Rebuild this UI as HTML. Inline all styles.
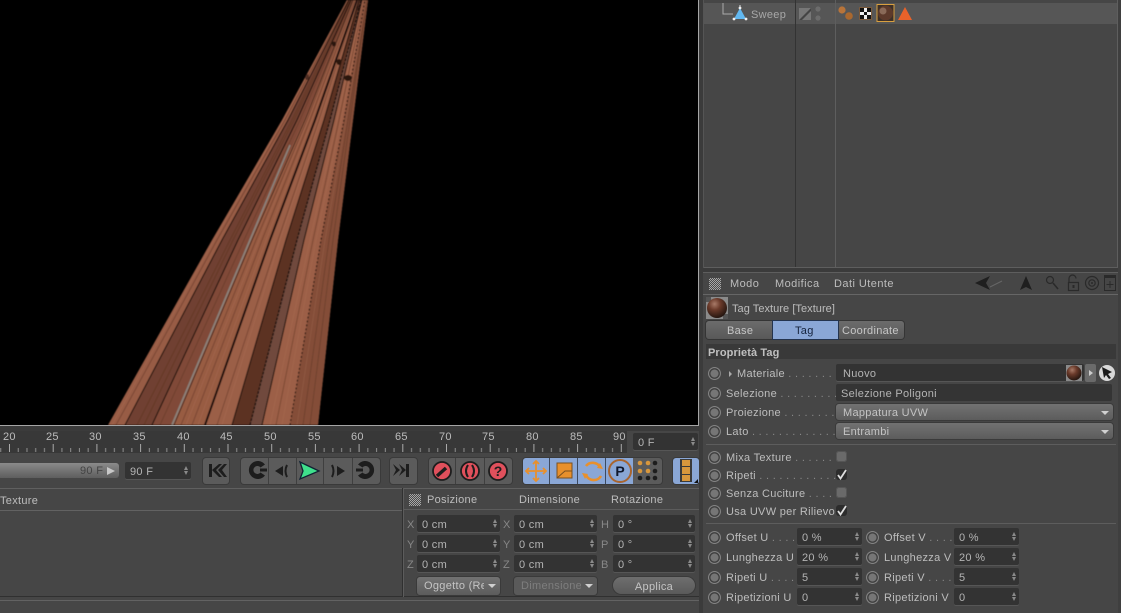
<!DOCTYPE html>
<html><head><meta charset="utf-8"><style>
html,body{margin:0;padding:0;background:#464646}
#p{position:relative;width:1121px;height:613px;overflow:hidden;background:#464646;font:11px/14px "Liberation Sans",sans-serif;color:#bdbdbd;letter-spacing:.3px}
#p div,#p svg{position:absolute}
.t{white-space:nowrap}
.l{background:#5d5d5d;height:1px}
.f{background:#333;height:17px;border-radius:2px;box-shadow:0 1px 0 #565656;white-space:nowrap;line-height:20px;text-indent:5px;color:#b4b4b4}
.f:before,.f:after{content:"";position:absolute;right:3px;border-left:2.5px solid transparent;border-right:2.5px solid transparent}
.f:before{top:4px;border-bottom:4px solid #8a8a8a}
.f:after{top:9px;border-top:4px solid #8a8a8a}
.r{width:13px;height:13px;border-radius:50%;background:radial-gradient(circle,#767676 0,#767676 3.6px,#383838 4.5px,#3c3c3c 5px,#8c8c8c 5.8px,#777 6.5px)}
.d{background:linear-gradient(#727272,#5c5c5c);height:18px;border-radius:3px;line-height:19px;text-indent:7px;color:#c4c4c4;box-shadow:0 0 0 1px #3a3a3a}
.d:after{content:"";position:absolute;right:4px;top:7px;border-left:4px solid transparent;border-right:4px solid transparent;border-top:4px solid #d0d0d0}
.d span{display:inline-block;overflow:hidden;vertical-align:top}
.g{background:#5b5b5b;border-radius:3px;box-shadow:0 0 0 1px #3a3a3a;height:26px}
.s{width:1px;height:26px;background:#3f3f3f;top:0}
.c{width:11px;height:11px;border-radius:3px;background:#6a6a6a;box-shadow:inset 0 0 0 1px #555}
.k{width:11px;height:11px;border-radius:3px;background:#2c2c2c}
.grip{width:12px;height:12px;background:repeating-conic-gradient(#a8a8a8 0 25%,#4a4a4a 0 50%) 0 0/2px 2px}
</style></head><body><div id="p">

<!-- viewport -->
<div style="left:0;top:0;width:698px;height:425px;background:#000"></div>
<svg style="left:0;top:0" width="698" height="425" viewBox="0 0 698 425">
<defs><filter id="sf"><feGaussianBlur stdDeviation=".45"/></filter></defs>
<g filter="url(#sf)">
<polygon points="108,425 212,240 282,120 347,0 368,0 353,120 338,240 318,425" fill="#985c45"/>
<polygon points="125,425 222,240 288,120 349,0 351,0 297,120 238,240 152,425" fill="#704130"/>
<polygon points="152,425 238,240 297,120 351,0 353,0 304,120 250,240 172,425" fill="#804a37"/>
<polygon points="172,425 250,240 304,120 353,0 357,0 315,120 270,240 205,425" fill="#985b43"/>
<polygon points="205,425 270,240 315,120 357,0 359,0 324,120 286,240 232,425" fill="#9b5f47"/>
<polygon points="232,425 286,240 324,120 359,0 361,0 330,120 297,240 250,425" fill="#5c3324"/>
<polygon points="250,425 297,240 330,120 361,0 362,0 334,120 304,240 262,425" fill="#6f4a3d"/>
<polygon points="262,425 304,240 334,120 362,0 365,0 344,120 321,240 290,425" fill="#9c5f46"/>
<polygon points="290,425 321,240 344,120 365,0 368,0 353,120 338,240 318,425" fill="#844e39"/>
<g fill="none" stroke="#5c3323" stroke-width=".9" opacity=".55">
<path d="M116,425 217,240 285,120 348,0"/><path d="M137,425 230,240 292,120 350,0"/><path d="M144,425 233,240 294,120 351,0"/><path d="M160,425 244,240 300,120 352,0"/><path d="M181,425 256,240 307,120 354,0"/><path d="M192,425 262,240 310,120 355,0"/><path d="M217,425 278,240 319,120 358,0"/><path d="M276,425 313,240 339,120 364,0"/><path d="M303,425 329,240 348,120 367,0"/><path d="M310,425 333,240 350,120 367,0"/>
</g>
<g fill="none" stroke="#c48a70" stroke-width=".6" opacity=".25">
<path d="M112,425 214,240 283,120 347,0"/><path d="M186,425 259,240 308,120 354,0"/><path d="M198,425 266,240 312,120 356,0"/><path d="M222,425 280,240 320,120 358,0"/><path d="M270,425 310,240 337,120 363,0"/><path d="M282,425 316,240 341,120 364,0"/><path d="M297,425 325,240 346,120 366,0"/>
</g>
<g stroke="#1c100b" fill="none" stroke-width="1.100"><path d="M125,425 222,240 288,120 349,0"/><path d="M152,425 238,240 297,120 351,0"/><path d="M232,425 286,240 324,120 359,0"/><path d="M262,425 304,240 334,120 362,0"/><path d="M290,425 321,240 344,120 365,0" stroke-dasharray="2 2"/></g>
<path d="M172,425 250,240 290,145" stroke="#8a827c" stroke-width="1.700" fill="none"/>
<path d="M174,425 252,240 305,120 353,0" stroke="#241510" stroke-width=".8" fill="none"/>
<path d="M205,425 270,240 315,120 357,0" stroke="#1c0f0a" stroke-width="2" fill="none"/>
<path d="M250,425 297,240 330,120 361,0" stroke="#15100e" stroke-width="1.300" stroke-dasharray="3 1" fill="none"/>
<g fill="#2a1610"><ellipse cx="348" cy="78" rx="4" ry="3"/><ellipse cx="339" cy="62" rx="2.500" ry="3"/><ellipse cx="334" cy="44" rx="2" ry="2.500"/><ellipse cx="307" cy="77" rx="2" ry="3" opacity=".6"/><ellipse cx="358" cy="8" rx="2" ry="2" opacity=".7"/></g>
</g>
</svg>

<!-- right dark divider -->
<div style="left:698px;top:0;width:1px;height:426px;background:#a5a5a5"></div>
<div style="left:699px;top:0;width:4px;height:613px;background:#3b3b3b"></div>

<!-- object manager -->
<div style="left:703px;top:0;width:415px;height:268px;background:#464646"></div>
<div style="left:703px;top:3px;width:415px;height:21px;background:#565656"></div>
<div style="left:795px;top:0;width:1px;height:268px;background:#333"></div>
<div style="left:835px;top:0;width:1px;height:268px;background:#5e5e5e"></div>
<div style="left:703px;top:267px;width:415px;height:1px;background:#5e5e5e"></div>
<div style="left:703px;top:268px;width:418px;height:4px;background:#3b3b3b"></div>
<div style="left:1117px;top:0;width:1px;height:268px;background:#5e5e5e"></div>
<div style="left:1118px;top:0;width:3px;height:613px;background:#3f3f3f"></div>
<div style="left:703px;top:0;width:1px;height:268px;background:#555"></div>
<svg style="left:720px;top:0" width="50" height="24"><path d="M3,3V14H13" stroke="#aaa" fill="none"/><polygon points="20,8 14,19 26,19" fill="#62b8f0"/><path d="M20,5v2" stroke="#ddd"/><circle cx="20" cy="8" r="1.400" fill="#eee"/><circle cx="14" cy="19" r="1.400" fill="#eee"/><circle cx="26" cy="19" r="1.400" fill="#eee"/></svg>
<div class="t" style="left:751px;top:8px;color:#a8a8a8">Sweep</div>
<svg style="left:796px;top:3px" width="130" height="22">
<rect x="3" y="5" width="12" height="12" fill="#777"/><polygon points="3,17 15,5 15,8 6,17" fill="#444"/>
<circle cx="22" cy="6" r="2.600" fill="#6c6c6c"/><circle cx="22" cy="15" r="2.600" fill="#6c6c6c"/>
<circle cx="46" cy="7" r="3.600" fill="#b8743a"/><circle cx="53" cy="13" r="3.800" fill="#a9682f"/>
<rect x="63" y="4" width="13" height="13" fill="#7a5a3c"/><rect x="64" y="5" width="11" height="11" fill="#eee"/><g fill="#111"><rect x="64" y="5" width="4" height="4"/><rect x="71" y="5" width="4" height="4"/><rect x="68" y="9" width="3" height="3"/><rect x="64" y="12" width="4" height="4"/><rect x="71" y="12" width="4" height="4"/></g>
<rect x="81" y="1.500" width="17" height="17" fill="#3c3028" stroke="#d8a040"/><circle cx="89.500" cy="10" r="7.500" fill="#5d3a2b"/><circle cx="87" cy="8" r="3.500" fill="#8a6a58"/>
<polygon points="109,4 102,17 116,17" fill="#e8622a"/>
</svg>

<!-- attribute manager -->
<div class="l" style="left:703px;top:272px;width:415px;background:#5e5e5e"></div>
<div class="l" style="left:703px;top:294px;width:415px;background:#666"></div>
<div class="grip" style="left:709px;top:278px"></div>
<div class="t" style="left:730px;top:277px;letter-spacing:.45px">Modo</div>
<div class="t" style="left:775px;top:277px;letter-spacing:.45px">Modifica</div>
<div class="t" style="left:834px;top:277px;letter-spacing:.45px">Dati Utente</div>
<svg style="left:970px;top:272px" width="151" height="22">
<polygon points="5,11 20,4 16,11 20,18" fill="#1f1f1f"/><path d="M20,15 32,9" stroke="#666"/>
<polygon points="56,4 50,18 56,15 62,18" fill="#1f1f1f"/>
<circle cx="80" cy="8" r="3.500" fill="none" stroke="#2a2a2a" stroke-width="1.200"/><path d="M83,11l5,6" stroke="#2a2a2a" stroke-width="1.600"/>
<path d="M99,10V6.500a3.500,3.500 0 0 1 7,0" fill="none" stroke="#2a2a2a" stroke-width="1.200"/><rect x="98.500" y="10.500" width="10" height="8" fill="none" stroke="#2a2a2a" stroke-width="1.200"/><rect x="102.500" y="13" width="2" height="3" fill="#2a2a2a"/>
<circle cx="122" cy="11" r="6.500" fill="none" stroke="#2a2a2a" stroke-width="1.200"/><circle cx="122" cy="11" r="3.200" fill="none" stroke="#2a2a2a" stroke-width="1.200"/><circle cx="122" cy="11" r="1" fill="#2a2a2a"/>
<rect x="134.500" y="5.500" width="11" height="13" fill="none" stroke="#2a2a2a"/><rect x="134" y="3" width="12" height="2" fill="#2a2a2a"/><path d="M140,9v7M136.500,12.500h7" stroke="#2a2a2a"/>
</svg>

<svg style="left:706px;top:297px" width="22" height="22"><defs><radialGradient id="b" cx=".38" cy=".3" r=".75"><stop offset="0" stop-color="#a87a68"/><stop offset=".4" stop-color="#6a3a2a"/><stop offset="1" stop-color="#1e120d"/></radialGradient></defs><rect width="22" height="22" fill="#8a8a8a"/><rect x="0" y="0" width="5" height="5" fill="#555"/><rect x="17" y="17" width="5" height="5" fill="#555"/><circle cx="11" cy="11" r="10" fill="url(#b)"/></svg>
<div class="t" style="left:732px;top:302px;letter-spacing:.05px">Tag Texture [Texture]</div>

<div style="left:706px;top:321px;width:198px;height:18px;border-radius:3px;background:linear-gradient(#6c6c6c,#585858);box-shadow:0 0 0 1px #353535"></div>
<div style="left:773px;top:321px;width:65px;height:18px;background:#8aa7d6;box-shadow:0 0 0 1px #24344e"></div>
<div class="t" style="left:727px;top:324px;color:#c6c6c6">Base</div>
<div class="t" style="left:795px;top:324px;color:#15233c">Tag</div>
<div class="t" style="left:842px;top:324px;color:#c6c6c6">Coordinate</div>

<div style="left:706px;top:344px;width:410px;height:15px;background:#393939"></div>
<div class="t" style="left:708px;top:346px;font-weight:bold;letter-spacing:.1px;color:#c0c0c0">Proprietà Tag</div>

<div class="r" style="left:708px;top:367px"></div>
<div class="t" style="left:737px;top:367px">Materiale <span style="color:#888">. . . . . . .</span></div>
<div style="left:729px;top:371px;width:0;height:0;border-left:3px solid #aaa;border-top:3px solid transparent;border-bottom:3px solid transparent"></div>
<div class="f" style="left:836px;top:364px;width:248px;text-indent:7px">Nuovo</div>
<svg style="left:1066px;top:364px" width="52" height="18"><rect x="0" y="1" width="16" height="16" fill="#8a8a8a"/><circle cx="8" cy="9" r="7.500" fill="url(#b)"/><rect x="19" y="0" width="11" height="18" rx="2" fill="#6a6a6a"/><polygon points="23,6 27,9 23,12" fill="#ccc"/><circle cx="41" cy="9" r="8" fill="#d8d8d8"/><polygon points="36,3 46,8 42,10 45,14 43,15 40,11 38,14" fill="#1a1a1a"/></svg>

<div class="r" style="left:708px;top:387px"></div>
<div class="t" style="left:726px;top:387px">Selezione<span style="color:#888"> . . . . . . . . .</span></div>
<div style="left:836px;top:384px;width:276px;height:17px;border-radius:2px;background:#343434;line-height:20px;text-indent:5px;color:#b4b4b4" class="t">Selezione Poligoni</div>

<div class="r" style="left:708px;top:406px"></div>
<div class="t" style="left:726px;top:406px">Proiezione <span style="color:#888">. . . . . . . .</span></div>
<div class="d t" style="left:836px;top:404px;width:277px;height:16px;line-height:18px">Mappatura UVW</div>

<div class="r" style="left:708px;top:425px"></div>
<div class="t" style="left:726px;top:425px">Lato <span style="color:#888">. . . . . . . . . . . . . .</span></div>
<div class="d t" style="left:836px;top:423px;width:277px;height:16px;line-height:18px">Entrambi</div>

<div class="l" style="left:706px;top:444px;width:410px"></div>

<div class="r" style="left:708px;top:451px"></div>
<div class="t" style="left:726px;top:451px">Mixa Texture <span style="color:#888">. . . . . .</span></div>
<div class="c" style="left:836px;top:451px"></div>
<div class="r" style="left:708px;top:469px"></div>
<div class="t" style="left:726px;top:469px">Ripeti <span style="color:#888">. . . . . . . . . . . .</span></div>
<div class="k" style="left:836px;top:469px"></div>
<svg style="left:835px;top:467px" width="14" height="14"><path d="M3,8 5.500,11.500 11,3" fill="none" stroke="#ddd" stroke-width="1.800"/></svg>
<div class="r" style="left:708px;top:487px"></div>
<div class="t" style="left:726px;top:487px">Senza Cuciture <span style="color:#888">. . . .</span></div>
<div class="c" style="left:836px;top:487px"></div>
<div class="r" style="left:708px;top:505px"></div>
<div class="t" style="left:726px;top:505px">Usa UVW per Rilievo</div>
<div class="k" style="left:836px;top:505px"></div>
<svg style="left:835px;top:503px" width="14" height="14"><path d="M3,8 5.500,11.500 11,3" fill="none" stroke="#ddd" stroke-width="1.800"/></svg>

<div class="l" style="left:706px;top:523px;width:410px"></div>

<div class="r" style="left:708px;top:531px"></div>
<div class="t" style="left:726px;top:531px">Offset U <span style="color:#888">. . . .</span></div>
<div class="f" style="left:797px;top:528px;width:65px">0 %</div>
<div class="r" style="left:866px;top:531px"></div>
<div class="t" style="left:884px;top:531px">Offset V <span style="color:#888">. . . .</span></div>
<div class="f" style="left:954px;top:528px;width:65px">0 %</div>

<div class="r" style="left:708px;top:551px"></div>
<div class="t" style="left:726px;top:551px">Lunghezza U</div>
<div class="f" style="left:797px;top:548px;width:65px">20 %</div>
<div class="r" style="left:866px;top:551px"></div>
<div class="t" style="left:884px;top:551px">Lunghezza V</div>
<div class="f" style="left:954px;top:548px;width:65px">20 %</div>

<div class="r" style="left:708px;top:571px"></div>
<div class="t" style="left:726px;top:571px">Ripeti U <span style="color:#888">. . . .</span></div>
<div class="f" style="left:797px;top:568px;width:65px">5</div>
<div class="r" style="left:866px;top:571px"></div>
<div class="t" style="left:884px;top:571px">Ripeti V <span style="color:#888">. . . .</span></div>
<div class="f" style="left:954px;top:568px;width:65px">5</div>

<div class="r" style="left:708px;top:591px"></div>
<div class="t" style="left:726px;top:591px">Ripetizioni U</div>
<div class="f" style="left:797px;top:588px;width:65px">0</div>
<div class="r" style="left:866px;top:591px"></div>
<div class="t" style="left:884px;top:591px">Ripetizioni V</div>
<div class="f" style="left:954px;top:588px;width:65px">0</div>

<!-- timeline -->
<div style="left:0;top:425px;width:699px;height:1px;background:#a5a5a5"></div>
<div style="left:0;top:426px;width:699px;height:5px;background:#3b3b3b"></div>
<div style="left:0;top:431px;width:627px;height:22px;background:#383838"></div>
<svg style="left:0;top:431px" width="627" height="22"><defs><pattern id="tk" x="9" y="0" width="43.7" height="22" patternUnits="userSpaceOnUse"><path d="M.5,13v8" stroke="#aaa"/><path d="M9.240,17v4M17.980,17v4M26.720,17v4M35.460,17v4" stroke="#8f8f8f"/></pattern></defs><rect width="622" height="22" fill="url(#tk)"/></svg>
<div class="t" style="left:3px;top:430px">20</div><div class="t" style="left:46px;top:430px">25</div><div class="t" style="left:89px;top:430px">30</div><div class="t" style="left:133px;top:430px">35</div><div class="t" style="left:177px;top:430px">40</div><div class="t" style="left:220px;top:430px">45</div><div class="t" style="left:264px;top:430px">50</div><div class="t" style="left:308px;top:430px">55</div><div class="t" style="left:351px;top:430px">60</div><div class="t" style="left:395px;top:430px">65</div><div class="t" style="left:439px;top:430px">70</div><div class="t" style="left:482px;top:430px">75</div><div class="t" style="left:526px;top:430px">80</div><div class="t" style="left:570px;top:430px">85</div><div class="t" style="left:613px;top:430px">90</div>
<div class="f" style="left:633px;top:433px;width:65px">0 F</div>

<!-- transport -->
<div style="left:0;top:463px;width:119px;height:15px;border-radius:0 3px 3px 0;background:linear-gradient(#8a8a8a,#5e5e5e)"></div>
<div class="t" style="left:80px;top:464px;color:#444">90 F</div>
<svg style="left:105px;top:465px" width="12" height="12"><polygon points="2,2 10,6 2,10" fill="#c8c8c8"/></svg>
<div class="f" style="left:125px;top:462px;width:66px">90 F</div>

<div class="g" style="left:203px;top:458px;width:26px"></div>
<div class="g" style="left:241px;top:458px;width:139px"><div class="s" style="left:27px"></div><div class="s" style="left:55px"></div><div class="s" style="left:82px"></div><div class="s" style="left:111px"></div></div>
<div class="g" style="left:390px;top:458px;width:27px"></div>
<div class="g" style="left:429px;top:458px;width:83px"><div class="s" style="left:26px"></div><div class="s" style="left:55px"></div></div>
<div class="g" style="left:523px;top:458px;width:139px"></div>
<div style="left:523px;top:458px;width:110px;height:26px;background:#8aa7d6;border-radius:3px 0 0 3px"><div class="s" style="left:26px;background:#3c4a60"></div><div class="s" style="left:54px;background:#3c4a60"></div><div class="s" style="left:82px;background:#3c4a60"></div></div>
<div style="left:673px;top:458px;width:26px;height:26px;background:#8aa7d6;border-radius:3px;box-shadow:0 0 0 1px #3a3a3a"></div>

<svg style="left:195px;top:452px" width="510" height="38">
<g fill="#1d1d1d">
<rect x="14" y="12" width="3" height="13"/><polygon points="17,18 24,12 27,12 21,18 27,25 24,25"/><polygon points="23,18 29,12 32,12 27,18 32,25 29,25"/>
<path d="M70,12.500A9,9 0 1 0 70,23.500L65.500,20.500A4,4 0 1 1 65.500,15.500Z"/><rect x="65" y="16.500" width="7" height="3"/>
<polygon points="80,19 88,14 88,24"/><path d="M92,13q-3,6 0,12" fill="none" stroke="#1d1d1d" stroke-width="2"/>
<path d="M137,13q3,6 0,12" fill="none" stroke="#1d1d1d" stroke-width="2"/><polygon points="142,14 150,19 142,24"/>
<path d="M163,12.500A9,9 0 1 1 163,23.500L167.500,20.500A4,4 0 1 0 167.500,15.500Z"/><rect x="161" y="16.500" width="7" height="3"/>
<polygon points="198,12 205,18 198,24 201,18"/><polygon points="204,12 211,18 204,24 207,18"/><rect x="211" y="12" width="3" height="13"/>
</g>
<polygon points="105,10 124,19 105,27 108,19" fill="#3fe08c" stroke="#123" stroke-width="1.300"/>
<!-- red -->
<g stroke="#1d1d1d" stroke-width="1.800" fill="#e0505c"><circle cx="247" cy="19" r="9"/><circle cx="275" cy="19" r="9"/><circle cx="303" cy="19" r="9"/></g>
<path d="M242,24l9,-8" stroke="#1d1d1d" stroke-width="3.500"/>
<path d="M273,13q-4,6 0,12M277,13q4,6 0,12" fill="none" stroke="#1d1d1d" stroke-width="2"/>
<text x="303" y="24" text-anchor="middle" style="font:bold 14px 'Liberation Sans',sans-serif;letter-spacing:0" fill="#1d1d1d">?</text>
<!-- move -->
<g stroke="#e8902c" stroke-width="1.800" fill="none"><path d="M341,9v20M331,19h20M338,12l3,-3 3,3M338,26l3,3 3,-3M334,16l-3,3 3,3M348,16l3,3 -3,3"/></g>
<rect x="362" y="11" width="15" height="15" fill="#e8902c" stroke="#7a5020"/><path d="M362,26 370,19 H377" fill="none" stroke="#7a5020"/>
<path d="M391,14A8.500,8.500 0 0 1 405,15M406,24A8.500,8.500 0 0 1 391,23" fill="none" stroke="#e8902c" stroke-width="2.600"/>
<polygon points="405,11 408,17 402,16" fill="#e8902c"/><polygon points="390,27 387,21 393,22" fill="#e8902c"/>
<circle cx="425" cy="19" r="11" fill="none" stroke="#a8652f" stroke-width="2"/>
<text x="425" y="24" text-anchor="middle" style="font:bold 14px 'Liberation Sans',sans-serif;letter-spacing:0" fill="#10182c">P</text>
<g fill="#d8973c"><circle cx="445" cy="11" r="2.300"/><circle cx="453" cy="11" r="2.300"/><circle cx="445" cy="19" r="2.300"/><circle cx="453" cy="19" r="2.300"/></g>
<g fill="#1d1d1d"><circle cx="460" cy="11" r="2.300"/><circle cx="460" cy="19" r="2.300"/><circle cx="445" cy="26" r="2.300"/><circle cx="453" cy="26" r="2.300"/><circle cx="460" cy="26" r="2.300"/></g>
<!-- film -->
<rect x="485" y="7" width="12" height="23" fill="#3a3a3a"/><rect x="487" y="8" width="8" height="6" fill="#d8973c"/><rect x="487" y="15" width="8" height="7" fill="#d8973c"/><rect x="487" y="23" width="8" height="6" fill="#d8973c"/>
<polygon points="503,31 503,27 499,31" fill="#111"/>
</svg>

<!-- lower left -->
<div class="l" style="left:0;top:488px;width:699px;background:#606060"></div>
<div class="t" style="left:0;top:494px">Texture</div>
<div class="l" style="left:0;top:510px;width:402px;background:#626262"></div>
<div class="l" style="left:0;top:596px;width:699px;background:#303030"></div>
<div class="l" style="left:0;top:600px;width:699px;background:#626262"></div>
<div style="left:402px;top:488px;width:1px;height:109px;background:#303030"></div>
<div style="left:403px;top:488px;width:1px;height:109px;background:#5c5c5c"></div>

<div class="grip" style="left:409px;top:494px"></div>
<div class="t" style="left:427px;top:493px">Posizione</div>
<div class="t" style="left:519px;top:493px">Dimensione</div>
<div class="t" style="left:611px;top:493px">Rotazione</div>
<div class="l" style="left:404px;top:509px;width:295px;background:#5c5c5c"></div>

<div class="t" style="left:407px;top:518px;color:#888">X</div><div class="f" style="left:417px;top:515px;width:83px">0 cm</div>
<div class="t" style="left:503px;top:518px;color:#888">X</div><div class="f" style="left:514px;top:515px;width:83px">0 cm</div>
<div class="t" style="left:601px;top:518px;color:#888">H</div><div class="f" style="left:613px;top:515px;width:82px">0 °</div>
<div class="t" style="left:407px;top:538px;color:#888">Y</div><div class="f" style="left:417px;top:535px;width:83px">0 cm</div>
<div class="t" style="left:503px;top:538px;color:#888">Y</div><div class="f" style="left:514px;top:535px;width:83px">0 cm</div>
<div class="t" style="left:601px;top:538px;color:#888">P</div><div class="f" style="left:613px;top:535px;width:82px">0 °</div>
<div class="t" style="left:407px;top:558px;color:#888">Z</div><div class="f" style="left:417px;top:555px;width:83px">0 cm</div>
<div class="t" style="left:503px;top:558px;color:#888">Z</div><div class="f" style="left:514px;top:555px;width:83px">0 cm</div>
<div class="t" style="left:601px;top:558px;color:#888">B</div><div class="f" style="left:613px;top:555px;width:82px">0 °</div>

<div class="d t" style="left:417px;top:577px;width:83px;overflow:hidden;text-indent:0"><span style="width:60px;margin-left:7px">Oggetto (Re</span></div>
<div class="d t" style="left:514px;top:577px;width:83px;overflow:hidden;text-indent:0;background:#5a5a5a;color:#7e7e7e"><span style="width:60px;margin-left:7px">Dimensione</span></div>
<div style="left:613px;top:577px;width:82px;height:17px;border-radius:9px;background:linear-gradient(#6e6e6e,#5a5a5a);box-shadow:0 0 0 1px #3a3a3a;text-align:center;line-height:20px;color:#c4c4c4">Applica</div>

</div></body></html>
